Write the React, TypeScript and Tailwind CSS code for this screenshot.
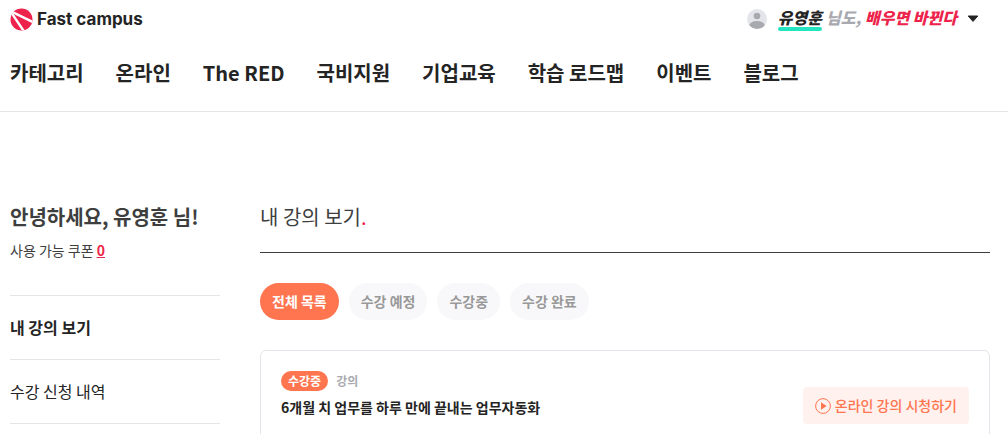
import React from 'react';

const NAV_ITEMS = ['카테고리', '온라인', 'The RED', '국비지원', '기업교육', '학습 로드맵', '이벤트', '블로그'];

const SIDE_MENUS = [
  { label: '내 강의 보기', active: true },
  { label: '수강 신청 내역', active: false },
];

const FILTERS = [
  { label: '전체 목록', active: true },
  { label: '수강 예정', active: false },
  { label: '수강중', active: false },
  { label: '수강 완료', active: false },
];

function Logo() {
  return (
    <a href="#" className="flex items-center gap-1 text-[#242424]">
      <svg width="23" height="23" viewBox="0 0 23 23" aria-hidden="true">
        <defs>
          <clipPath id="logo-circle">
            <circle cx="11.5" cy="11.5" r="11" />
          </clipPath>
        </defs>
        <g clipPath="url(#logo-circle)">
          <rect width="23" height="23" fill="#ed234b" />
          <path d="M0 2.8L23 14.2" stroke="#fff" strokeWidth="2.4" />
          <path d="M0 2.6L14.4 24" stroke="#fff" strokeWidth="2.4" />
        </g>
      </svg>
      <span className="font-[family-name:Inter] text-[17px] leading-6 font-bold">Fast campus</span>
    </a>
  );
}

function UserMenu() {
  return (
    <button type="button" className="flex items-center text-[16px] leading-5 font-black italic">
      <svg width="20" height="20" viewBox="0 0 20 20" className="mr-[11px]" aria-hidden="true">
        <defs>
          <clipPath id="avatar-circle">
            <circle cx="10" cy="10" r="10" />
          </clipPath>
        </defs>
        <g clipPath="url(#avatar-circle)">
          <rect width="20" height="20" fill="#e4e5ea" />
          <circle cx="10" cy="7" r="3.3" fill="#a9a9b0" />
          <ellipse cx="10" cy="17" rx="8" ry="5" fill="#a9a9b0" />
        </g>
      </svg>
      <span className="flex pb-1">
        <span className="relative text-[#242424]">
          <span className="absolute inset-x-0 -bottom-1 h-1 rounded-full bg-[#24e5c2]" />
          <span className="relative">유영훈</span>
        </span>
        <span className="ml-1 text-[#a9a9b0]">님도,</span>
        <span className="ml-1 text-[#ed234b]">배우면 바뀐다</span>
      </span>
      <svg width="12" height="8" viewBox="0 0 12 8" className="ml-[10px]" aria-hidden="true">
        <path d="M1.2 1h9.6L6 6.4z" fill="#242424" stroke="#242424" strokeLinejoin="round" />
      </svg>
    </button>
  );
}

function Header() {
  return (
    <header className="border-b border-[#e5e5e5] pb-[23px]">
      <div className="flex h-[38px] items-center justify-between pr-[29px] pl-[10px]">
        <Logo />
        <UserMenu />
      </div>
      <nav className="mt-5 flex gap-8 px-[10px] text-[20px] leading-[30px] font-bold text-[#242424]">
        {NAV_ITEMS.map((item) => (
          <a key={item} href="#" className="whitespace-nowrap">
            {item}
          </a>
        ))}
      </nav>
    </header>
  );
}

function Sidebar() {
  return (
    <aside className="w-[210px] shrink-0">
      <h2 className="text-[20px] leading-[30px] font-bold whitespace-nowrap text-[#3e3e3e]">안녕하세요, 유영훈 님!</h2>
      <p className="mt-2 text-[14px] leading-5 text-[#3e3e3e]">
        사용 가능 쿠폰{' '}
        <a href="#" className="font-bold text-[#ed234b] underline">
          0
        </a>
      </p>
      <ul className="mt-[35px] border-t border-[#e5e5e5]">
        {SIDE_MENUS.map((menu) => (
          <li key={menu.label} className="border-b border-[#e5e5e5]">
            <a
              href="#"
              className={`block py-5 text-[16px] leading-[23px] text-[#242424] ${menu.active ? 'font-bold' : 'font-normal'}`}
            >
              {menu.label}
            </a>
          </li>
        ))}
      </ul>
    </aside>
  );
}

function CourseCard() {
  return (
    <article className="mt-[30px] flex items-start justify-between rounded-md border border-[#e4e5ea] p-5 pb-10">
      <div>
        <div className="flex items-center gap-2 text-[12px] leading-5 font-bold">
          <span className="rounded-full bg-[#ff7550] px-[7px] text-white">수강중</span>
          <span className="text-[#a9a9b0]">강의</span>
        </div>
        <h3 className="mt-[6px] text-[14px] leading-5 font-bold text-[#242424]">6개월 치 업무를 하루 만에 끝내는 업무자동화</h3>
      </div>
      <button
        type="button"
        className="mt-4 flex items-center gap-1 rounded bg-[#fff1ed] px-3 py-2 text-[14px] leading-[21px] font-medium text-[#ff7550]"
      >
        <svg width="16" height="16" viewBox="0 0 16 16" aria-hidden="true">
          <circle cx="8" cy="8" r="7.4" fill="none" stroke="currentColor" />
          <path d="M6 4.2v7.6L11.6 8z" fill="currentColor" />
        </svg>
        온라인 강의 시청하기
      </button>
    </article>
  );
}

export default function App() {
  return (
    <div className="h-screen overflow-hidden bg-white font-['Noto_Sans_CJK_KR',sans-serif]">
      <Header />
      <div className="flex gap-10 pt-[90px] pr-[18px] pl-[10px]">
        <Sidebar />
        <main className="min-w-0 flex-1">
          <h1 className="border-b border-[#3e3e3e] pb-5 text-[20px] leading-[30px] font-normal text-[#3e3e3e]">
            내 강의 보기<span className="text-[#ed234b]">.</span>
          </h1>
          {/* 수강 상태 필터 */}
          <div className="mt-[30px] flex gap-[10px]">
            {FILTERS.map((filter) => (
              <button
                key={filter.label}
                type="button"
                className={`rounded-full px-3 py-2 text-[14px] leading-[21px] font-bold ${
                  filter.active ? 'bg-[#ff7550] text-white' : 'bg-[#f8f8fa] text-[#999999]'
                }`}
              >
                {filter.label}
              </button>
            ))}
          </div>
          <CourseCard />
        </main>
      </div>
    </div>
  );
}
